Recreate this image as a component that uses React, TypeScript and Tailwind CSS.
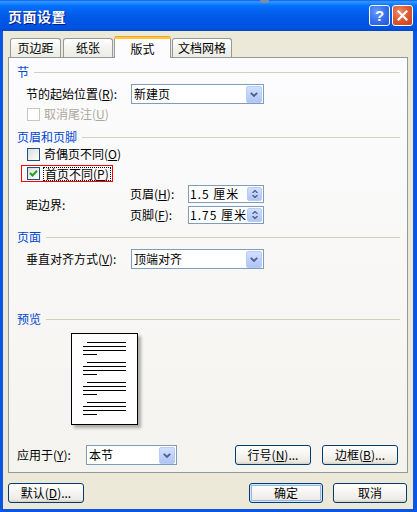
import React from "react";

const F = "font-['Noto_Sans_CJK_SC',sans-serif]";

function M({ c }: { c: string }) {
  return (
    <span>
      (<span className="underline underline-offset-[1px]">{c}</span>)
    </span>
  );
}

function Header({ text, className = "" }: { text: string; className?: string }) {
  return (
    <div className={`flex items-center h-[14px] ${className}`}>
      <span className="text-[#0046D5] text-[12px] leading-[14px] whitespace-nowrap">{text}</span>
      <div className="flex-1 h-px bg-[#D0D0BF] ml-[5px]" />
    </div>
  );
}

function DropBtn() {
  return (
    <div className="w-[16px] h-[17px] rounded-[2px] border border-[#B9CCF6] bg-[linear-gradient(180deg,#D2E0FD_0%,#BCCFF9_60%,#AFC5F5_100%)] flex items-center justify-center">
      <svg width="8" height="5" viewBox="0 0 8 5">
        <path d="M0.8 0.8 L4 4 L7.2 0.8" stroke="#4D6185" strokeWidth="1.8" fill="none" />
      </svg>
    </div>
  );
}

function Select({ value, w }: { value: string; w: string }) {
  return (
    <div className={`h-[20px] ${w} border border-[#7F9DB9] bg-white flex items-center justify-between pl-[2px] pr-px`}>
      <span className="text-[12px] leading-[14px]">{value}</span>
      <DropBtn />
    </div>
  );
}

function Spin({ value }: { value: string }) {
  return (
    <div className="h-[18px] w-[76px] border border-[#7F9DB9] bg-white flex items-center justify-between pl-[1px] pr-px">
      <span className="text-[12px] leading-[14px] tracking-[1px]">{value}</span>
      <div className="w-[15px] h-[14px] rounded-[2px] border border-[#B9CCF6] bg-[linear-gradient(180deg,#D2E0FD_0%,#BCCFF9_60%,#AFC5F5_100%)] flex flex-col items-center justify-center gap-[2px]">
        <svg width="6" height="3" viewBox="0 0 6 3">
          <path d="M0.5 3 L3 0.5 L5.5 3" stroke="#4D6185" strokeWidth="1.3" fill="none" />
        </svg>
        <svg width="6" height="3" viewBox="0 0 6 3">
          <path d="M0.5 0 L3 2.5 L5.5 0" stroke="#4D6185" strokeWidth="1.3" fill="none" />
        </svg>
      </div>
    </div>
  );
}

function Check({ checked = false, disabled = false }: { checked?: boolean; disabled?: boolean }) {
  return (
    <div
      className={`w-[13px] h-[13px] shrink-0 border flex items-center justify-center ${
        disabled ? "border-[#CAC8BB] bg-white" : "border-[#1C5180] bg-[linear-gradient(135deg,#DCDCD7_0%,#FFFFFF_100%)]"
      }`}
    >
      {checked && (
        <svg width="9" height="9" viewBox="0 0 9 9">
          <path d="M1 4 L3.5 6.5 L8 1.8" stroke="#21A121" strokeWidth="2" fill="none" />
        </svg>
      )}
    </div>
  );
}

function Btn({ children, w, def = false }: { children: React.ReactNode; w: string; def?: boolean }) {
  return (
    <div
      className={`${w} h-[20px] rounded-[3px] border border-[#003C74] bg-[linear-gradient(180deg,#FFFFFF_0%,#F5F4F0_50%,#ECEBE6_85%,#D6D0C5_100%)] flex items-center justify-center text-[12px] leading-[14px] whitespace-nowrap ${
        def ? "shadow-[inset_0_0_0_1px_#CEE7FF,inset_0_0_0_2px_#98B8EA]" : ""
      }`}
    >
      {children}
    </div>
  );
}

function Tab({ label, w, active = false, ml = "" }: { label: string; w: string; active?: boolean; ml?: string }) {
  if (active) {
    return (
      <div className={`${w} ${ml} h-[22px] -mb-px relative z-10 rounded-t-[3px] border-x border-[#919B9C] bg-[#FCFCFE] flex flex-col`}>
        <div className="h-[3px] rounded-t-[3px] bg-[linear-gradient(180deg,#E68B2C_0%,#FFC73C_45%,#FFC73C_100%)] -mx-px" />
        <div className="flex-1 flex items-center justify-center text-[12px] leading-[14px]">{label}</div>
      </div>
    );
  }
  return (
    <div
      className={`${w} ${ml} h-[19px] mt-[2px] rounded-t-[3px] border-t border-x border-[#919B9C] bg-[linear-gradient(180deg,#FFFFFF_0%,#F4F3EE_50%,#ECEBE6_100%)] flex items-center justify-center text-[12px] leading-[14px]`}
    >
      {label}
    </div>
  );
}

function TitleBar() {
  return (
    <div className="h-[31px] shrink-0 flex items-center justify-between pl-[8px] pr-[4px] bg-[linear-gradient(180deg,#0058EE_0%,#3593FF_5%,#288EFF_9%,#127DFF_14%,#036FFC_20%,#0262EE_38%,#0057E5_58%,#0054E3_80%,#0052DE_92%,#0046C8_100%)]">
      <span className="text-white font-bold text-[14px] leading-[16px] tracking-[0.5px] [text-shadow:1px_1px_0_#0A1883]">
        页面设置
      </span>
      <div className="flex items-center gap-[2px]">
        <div className="w-[21px] h-[21px] rounded-[3px] border border-white bg-[radial-gradient(circle_at_35%_30%,#6A9CFF_0%,#3C76EE_45%,#1E53D8_100%)] flex items-center justify-center text-white font-bold text-[15px] leading-none font-['Liberation_Sans',sans-serif]">
          ?
        </div>
        <div className="w-[21px] h-[21px] rounded-[3px] border border-white bg-[radial-gradient(circle_at_35%_30%,#F28B6A_0%,#E05B34_45%,#C83F16_100%)] flex items-center justify-center">
          <svg width="11" height="11" viewBox="0 0 11 11">
            <path d="M1.5 1.5 L9.5 9.5 M9.5 1.5 L1.5 9.5" stroke="white" strokeWidth="2.2" strokeLinecap="square" />
          </svg>
        </div>
      </div>
    </div>
  );
}

function PreviewPage() {
  const group = (k: number) => (
    <div key={k} className="flex flex-col gap-[3px]">
      <div className="h-px bg-black ml-[15px] mr-[11px]" />
      <div className="h-px bg-black ml-[11px] mr-[11px]" />
      <div className="h-px bg-black ml-[11px] mr-[11px]" />
      <div className="h-px bg-black ml-[11px] w-[14px]" />
    </div>
  );
  return (
    <div className="ml-[54px] mt-[7px] w-[67px] h-[92px] border border-black bg-white shadow-[3px_3px_3px_rgba(0,0,0,0.3)] pt-[8px] flex flex-col gap-[7px]">
      {[0, 1, 2, 3].map(group)}
    </div>
  );
}

export default function App() {
  return (
    <div className={`relative w-[417px] h-[512px] overflow-hidden bg-[#0A55E6] flex flex-col ${F} text-[12px] text-black`}>
      <TitleBar />
      <div className="ml-[3px] mr-[4px] mb-[3px] flex-1 bg-[#ECE9D8] flex flex-col pl-[5px] pr-[5px]">
        {/* tabs */}
        <div className="flex items-start mt-[5px] ml-[2px] h-[21px]">
          <Tab label="页边距" w="w-[51px]" />
          <Tab label="纸张" w="w-[50px]" ml="ml-[2px]" />
          <Tab label="版式" w="w-[57px]" ml="ml-[1px]" active />
          <Tab label="文档网格" w="w-[60px]" ml="ml-[1px]" />
        </div>
        {/* panel */}
        <div className="h-[416px] border border-[#919B9C] bg-[linear-gradient(180deg,#FCFCFE_0%,#F4F3EE_100%)] flex flex-col pl-[8px] pr-[7px]">
          <Header text="节" className="mt-[7px]" />
          <div className="mt-[5px] h-[20px] flex items-center pl-[9px]">
            <span className="w-[105px] whitespace-nowrap">
              节的起始位置<M c="R" />:
            </span>
            <Select value="新建页" w="w-[133px]" />
          </div>
          <div className="mt-[2px] h-[16px] flex items-center pl-[10px] gap-[4px] text-[#ACA899]">
            <Check disabled />
            <span>
              取消尾注<M c="U" />
            </span>
          </div>
          <Header text="页眉和页脚" className="mt-[8px]" />
          <div className="mt-[2px] h-[16px] flex items-center pl-[10px] gap-[4px]">
            <Check />
            <span>
              奇偶页不同<M c="O" />
            </span>
          </div>
          <div className="mt-[3px] ml-[4px] w-[92px] h-[17px] border border-[#F00] flex items-center pl-[5px] gap-[3px]">
            <Check checked />
            <span className="border border-dotted border-black px-px leading-[12px]">
              首页不同<M c="P" />
            </span>
          </div>
          <div className="mt-[3px] flex pl-[9px]">
            <div className="w-[104px] flex items-center">距边界:</div>
            <div className="flex flex-col gap-[3px]">
              <div className="flex items-center">
                <span className="w-[58px] whitespace-nowrap">
                  页眉<M c="H" />:
                </span>
                <Spin value="1.5 厘米" />
              </div>
              <div className="flex items-center">
                <span className="w-[58px] whitespace-nowrap">
                  页脚<M c="F" />:
                </span>
                <Spin value="1.75 厘米" />
              </div>
            </div>
          </div>
          <Header text="页面" className="mt-[6px]" />
          <div className="mt-[5px] h-[20px] flex items-center pl-[9px]">
            <span className="w-[105px] whitespace-nowrap">
              垂直对齐方式<M c="V" />:
            </span>
            <Select value="顶端对齐" w="w-[133px]" />
          </div>
          <Header text="预览" className="mt-[43px]" />
          <PreviewPage />
          <div className="mt-[20px] h-[20px] flex items-center">
            <span className="w-[69px] whitespace-nowrap">
              应用于<M c="Y" />:
            </span>
            <Select value="本节" w="w-[91px]" />
            <div className="ml-[58px]">
              <Btn w="w-[76px]">
                行号<M c="N" />...
              </Btn>
            </div>
            <div className="ml-[11px]">
              <Btn w="w-[76px]">
                边框<M c="B" />...
              </Btn>
            </div>
          </div>
        </div>
        {/* bottom buttons */}
        <div className="mt-[10px] flex items-center justify-between pr-px">
          <Btn w="w-[76px]">
            默认<M c="D" />...
          </Btn>
          <div className="flex gap-[10px]">
            <Btn w="w-[74px]" def>
              确定
            </Btn>
            <Btn w="w-[74px]">取消</Btn>
          </div>
        </div>
      </div>
      <div className="absolute left-[260px] top-0 w-[9px] h-[3px] rounded-b-[3px] bg-[#7C8CA6]" />
    </div>
  );
}
